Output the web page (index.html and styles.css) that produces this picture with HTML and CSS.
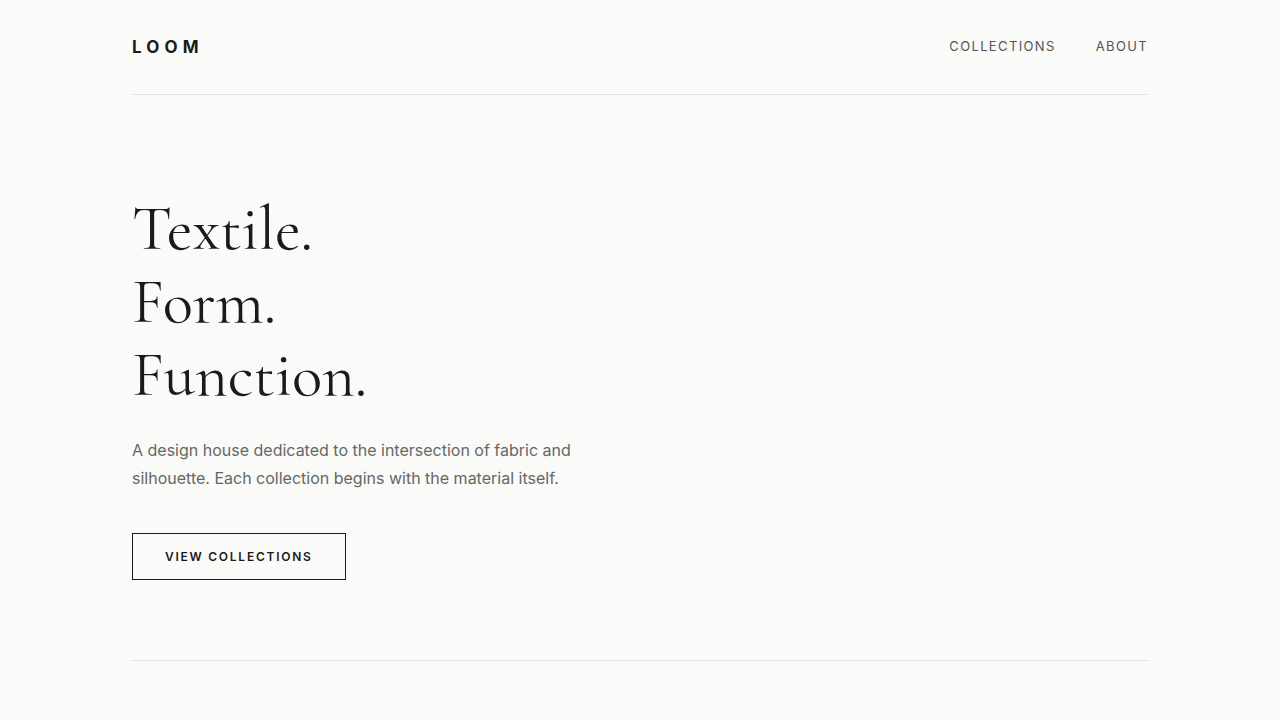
FILE: index.html
```html
<!DOCTYPE html>
<html lang="en">
<head>
  <meta charset="UTF-8" />
  <meta name="viewport" content="width=device-width, initial-scale=1" />
  <title>Loom</title>
  <link rel="stylesheet" href="styles.css">
</head>
<body>
  <div class="page">
    <header class="site-header">
      <a class="logo" href="#">LOOM</a>
      <nav class="nav">
        <a href="#">Collections</a>
        <a href="#">About</a>
      </nav>
    </header>

    <section class="hero">
      <h1>Textile.<br>Form.<br>Function.</h1>
      <p>A design house dedicated to the intersection of fabric and silhouette. Each collection begins with the material itself.</p>
      <a class="btn" href="#">View Collections</a>
    </section>
  </div>
</body>
</html>
```

FILE: styles.css
```css
/* Quiet editorial layout */
body {
  margin: 0;
  background: #fafaf8;
  color: #1a1a1a;
  font-family: 'Inter', 'Liberation Sans', sans-serif;
}

a {
  color: inherit;
  text-decoration: none;
}

.page {
  width: 1016px;
  margin: 0 auto;
}

.site-header {
  display: flex;
  justify-content: space-between;
  align-items: center;
  padding: 36px 0;
  line-height: 22px;
  border-bottom: 1px solid #e0e0dd;
}

.logo {
  font-size: 17px;
  font-weight: 700;
  letter-spacing: 0.3em;
}

.nav {
  display: flex;
  gap: 40px;
  margin-top: -2px;
}

.nav a {
  font-size: 13px;
  letter-spacing: 0.105em;
  text-transform: uppercase;
  color: #555;
}

.hero {
  padding: 98px 0 80px;
  border-bottom: 1px solid #e0e0dd;
}

.hero h1 {
  margin: 0;
  font-family: 'Cormorant Garamond', 'Liberation Serif', serif;
  font-weight: 400;
  font-size: 63px;
  line-height: 73px;
  color: #1a1a1a;
}

.hero p {
  margin: 24px 0 41px;
  max-width: 460px;
  font-size: 16px;
  line-height: 28px;
  color: #666;
}

.btn {
  display: inline-block;
  padding: 16px 32px;
  border: 1px solid #1a1a1a;
  font-size: 12px;
  line-height: 13px;
  font-weight: 600;
  letter-spacing: 0.145em;
  text-transform: uppercase;
}
```
